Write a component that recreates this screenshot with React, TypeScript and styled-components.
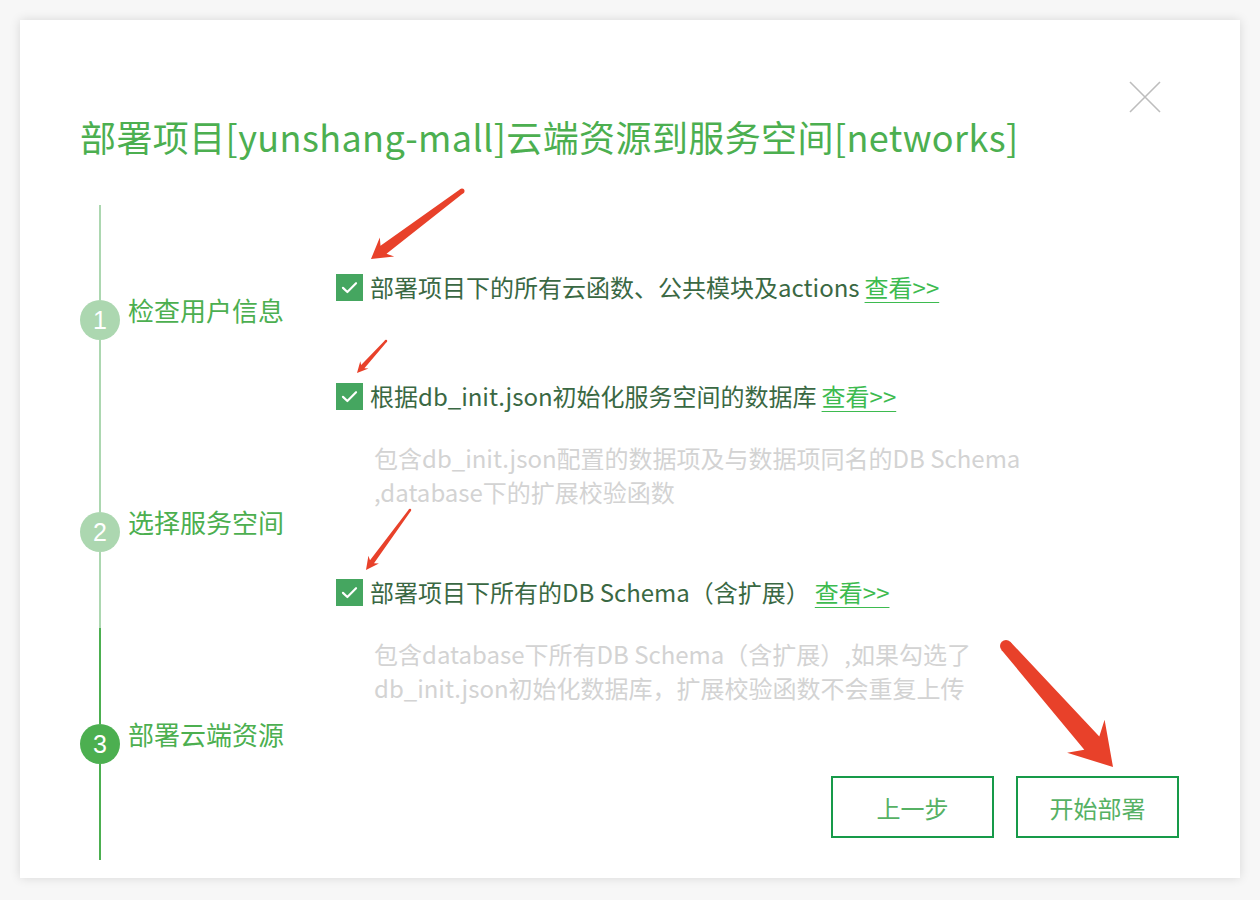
import React from "react";
import styled, { createGlobalStyle } from "styled-components";

const GlobalStyle = createGlobalStyle`
    body {
        margin: 0;
        background: #f7f7f7;
        font-family: "Noto Sans CJK SC", "Noto Sans", sans-serif;
    }
`;

const GREEN = "#4caf50";
const GREEN_LIGHT = "#acd7b0";

type Point = [number, number];

// tapered arrow: tail -> tip, widths in px
const arrowPath = (tail: Point, tip: Point, w0: number, w1: number, headLen: number, headHalf: number) => {
    const dx = tip[0] - tail[0];
    const dy = tip[1] - tail[1];
    const len = Math.hypot(dx, dy);
    const ux = dx / len;
    const uy = dy / len;
    const nx = -uy;
    const ny = ux;
    const at = (back: number, side: number): string => {
        const x = tip[0] - ux * back + nx * side;
        const y = tip[1] - uy * back + ny * side;
        return `${x.toFixed(1)},${y.toFixed(1)}`;
    };
    const join = headLen * 0.78;
    return [
        `M${at(len, w0 / 2)}`,
        `L${at(join, w1 / 2)}`,
        `L${at(headLen, headHalf)}`,
        `L${at(0, 0)}`,
        `L${at(headLen, -headHalf)}`,
        `L${at(join, -w1 / 2)}`,
        `L${at(len, -w0 / 2)}`,
        "Z",
    ].join(" ");
};

interface ArrowProps {
    tail: Point;
    tip: Point;
    w0: number;
    w1: number;
    headLen: number;
    headHalf: number;
}

const Arrow: React.FC<ArrowProps> = ({ tail, tip, w0, w1, headLen, headHalf }) => (
    <g fill="#e8412a">
        <path d={arrowPath(tail, tip, w0, w1, headLen, headHalf)} />
        <circle cx={tail[0]} cy={tail[1]} r={w0 / 2} />
    </g>
);

const CheckBox: React.FC = () => (
    <SC.Box>
        <svg width="19" height="19" viewBox="0 0 16 16">
            <polyline points="2.5,8.3 6.2,11.8 13.5,4.4" fill="none" stroke="#fff" strokeWidth="1.8" strokeLinecap="round" strokeLinejoin="round" />
        </svg>
    </SC.Box>
);

const steps = [
    { no: 1, label: "检查用户信息", active: false },
    { no: 2, label: "选择服务空间", active: false },
    { no: 3, label: "部署云端资源", active: true },
];

export default function App() {
    return (
        <SC.Page>
            <GlobalStyle />
            <SC.Card>
                <SC.Header>
                    <SC.Title>部署项目[yunshang-mall]云端资源到服务空间[networks]</SC.Title>
                    <SC.Close aria-label="close">
                        <svg width="34" height="34" viewBox="0 0 34 34">
                            <path d="M2 2 L32 32 M32 2 L2 32" stroke="#bdbdbd" strokeWidth="1.6" />
                        </svg>
                    </SC.Close>
                </SC.Header>
                <SC.Body>
                    <SC.Timeline>
                        <SC.Segment $height={95} />
                        <SC.Step>
                            <SC.Circle $active={steps[0].active}>{steps[0].no}</SC.Circle>
                            <SC.StepLabel>{steps[0].label}</SC.StepLabel>
                        </SC.Step>
                        <SC.Segment $height={172} />
                        <SC.Step>
                            <SC.Circle $active={steps[1].active}>{steps[1].no}</SC.Circle>
                            <SC.StepLabel>{steps[1].label}</SC.StepLabel>
                        </SC.Step>
                        <SC.Segment $height={76} />
                        <SC.Segment $height={96} $active />
                        <SC.Step>
                            <SC.Circle $active={steps[2].active}>{steps[2].no}</SC.Circle>
                            <SC.StepLabel>{steps[2].label}</SC.StepLabel>
                        </SC.Step>
                        <SC.Segment $height={96} $active />
                    </SC.Timeline>
                    <SC.Content>
                        <SC.Row>
                            <CheckBox />
                            <SC.RowText>部署项目下的所有云函数、公共模块及actions</SC.RowText>
                            <SC.Link>查看&gt;&gt;</SC.Link>
                        </SC.Row>
                        <SC.Row $gap={79}>
                            <CheckBox />
                            <SC.RowText>根据db_init.json初始化服务空间的数据库</SC.RowText>
                            <SC.Link>查看&gt;&gt;</SC.Link>
                        </SC.Row>
                        <SC.Desc>
                            包含db_init.json配置的数据项及与数据项同名的DB Schema
                            <br />
                            ,database下的扩展校验函数
                        </SC.Desc>
                        <SC.Row $gap={68}>
                            <CheckBox />
                            <SC.RowText>部署项目下所有的DB Schema（含扩展）</SC.RowText>
                            <SC.Link>查看&gt;&gt;</SC.Link>
                        </SC.Row>
                        <SC.Desc>
                            包含database下所有DB Schema（含扩展）,如果勾选了
                            <br />
                            db_init.json初始化数据库，扩展校验函数不会重复上传
                        </SC.Desc>
                        <SC.Actions>
                            <SC.Button>上一步</SC.Button>
                            <SC.Button>开始部署</SC.Button>
                        </SC.Actions>
                    </SC.Content>
                </SC.Body>
            </SC.Card>
            <SC.Marks width="1260" height="900" viewBox="0 0 1260 900">
                <Arrow tail={[462, 191]} tip={[371, 259]} w0={5} w1={10} headLen={20} headHalf={12} />
                <Arrow tail={[386, 341]} tip={[357, 373]} w0={2.5} w1={4.5} headLen={11} headHalf={5.5} />
                <Arrow tail={[410, 510]} tip={[366, 570]} w0={2.5} w1={5} headLen={13} headHalf={6.5} />
                <Arrow tail={[1006, 646]} tip={[1113, 767]} w0={12} w1={20} headLen={41} headHalf={25} />
            </SC.Marks>
        </SC.Page>
    );
}

const SC = {
    Page: styled.div`
        position: relative;
        width: 1260px;
        height: 900px;
        padding: 20px;
        box-sizing: border-box;
    `,
    Card: styled.div`
        width: 1220px;
        height: 858px;
        background: #fff;
        box-shadow: 0 0 10px rgba(0, 0, 0, 0.13);
        display: flex;
        flex-direction: column;
        box-sizing: border-box;
    `,
    Header: styled.div`
        display: flex;
        justify-content: space-between;
        align-items: flex-start;
        padding: 60px 78px 0 60px;
    `,
    Title: styled.h1`
        margin: 34px 0 0 0;
        font-size: 36px;
        line-height: 44px;
        font-weight: 400;
        color: ${GREEN};
        letter-spacing: 0.4px;
    `,
    Close: styled.button`
        border: none;
        background: none;
        padding: 0;
        width: 34px;
        height: 34px;
        cursor: pointer;
    `,
    Body: styled.div`
        display: flex;
        padding: 47px 61px 0 60px;
    `,
    Timeline: styled.div`
        width: 256px;
        display: flex;
        flex-direction: column;
    `,
    Segment: styled.div<{ $height: number; $active?: boolean }>`
        width: 2px;
        margin-left: 19px;
        height: ${(p) => p.$height}px;
        background: ${(p) => (p.$active ? GREEN : GREEN_LIGHT)};
    `,
    Step: styled.div`
        display: flex;
        align-items: center;
        height: 40px;
    `,
    Circle: styled.div<{ $active: boolean }>`
        width: 40px;
        height: 40px;
        border-radius: 50%;
        flex-shrink: 0;
        background: ${(p) => (p.$active ? GREEN : GREEN_LIGHT)};
        color: #fff;
        font-family: "Liberation Sans", Arial, sans-serif;
        font-size: 25px;
        display: flex;
        align-items: center;
        justify-content: center;
    `,
    StepLabel: styled.div`
        margin-left: 8px;
        padding-bottom: 20px;
        font-size: 26px;
        line-height: 32px;
        color: ${GREEN};
        white-space: nowrap;
    `,
    Content: styled.div`
        flex: 1;
        display: flex;
        flex-direction: column;
        padding-top: 67px;
    `,
    Row: styled.div<{ $gap?: number }>`
        display: flex;
        align-items: center;
        height: 30px;
        margin-top: ${(p) => p.$gap ?? 0}px;
    `,
    Box: styled.div`
        width: 27px;
        height: 27px;
        background: #45a660;
        display: flex;
        align-items: center;
        justify-content: center;
        flex-shrink: 0;
    `,
    RowText: styled.span`
        margin-left: 7px;
        font-size: 24px;
        line-height: 30px;
        color: #3a6843;
        white-space: nowrap;
    `,
    Link: styled.a`
        margin-left: 5px;
        font-size: 24px;
        line-height: 30px;
        color: #3dbb4f;
        text-decoration: underline;
        text-decoration-thickness: 1px;
        text-underline-offset: 5px;
        cursor: pointer;
        white-space: nowrap;
    `,
    Desc: styled.div`
        margin-top: 30px;
        padding-left: 38px;
        font-size: 24px;
        line-height: 34px;
        color: #d3d3d3;
        white-space: nowrap;
    `,
    Actions: styled.div`
        display: flex;
        justify-content: flex-end;
        gap: 22px;
        margin-top: 71px;
    `,
    Button: styled.button`
        width: 163px;
        height: 62px;
        background: #fff;
        border: 2px solid #179a49;
        font-family: "Noto Sans CJK SC", "Noto Sans", sans-serif;
        font-size: 24px;
        color: #56b164;
        cursor: pointer;
    `,
    Marks: styled.svg`
        position: absolute;
        left: 0;
        top: 0;
        pointer-events: none;
    `,
};
